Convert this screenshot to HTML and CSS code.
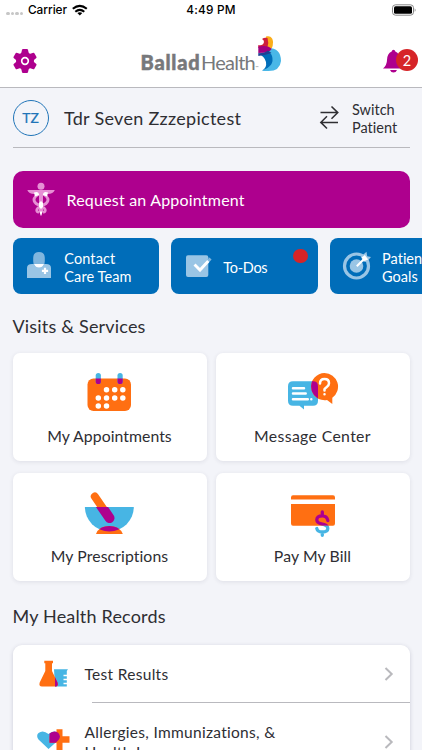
FILE: index.html
```html
<!DOCTYPE html>
<html lang="en">
<head>
<meta charset="utf-8">
<title>Ballad Health</title>
<link rel="stylesheet" href="styles.css">
</head>
<body>
<div class="status">
  <div class="carrier"><i></i><i></i><i></i><i></i><span>Carrier</span>
    <svg width="16" height="12" viewBox="73 4 16 12"><g fill="none" stroke="#000" stroke-width="2.1"><path d="M73.8 8.8Q80.8 2.8 87.8 8.8"/><path d="M76.3 11.7Q80.8 8 85.3 11.7"/></g><path d="M78.3 13.1Q80.8 11.2 83.3 13.1L80.8 15.6Z"/></svg>
  </div>
  <span class="time">4:49 PM</span>
  <svg class="battery" width="25" height="12" viewBox="391 4 25 12"><rect x="392.5" y="4.8" width="21" height="10.4" rx="3" fill="none" stroke="#888"/><rect x="394" y="6.2" width="18" height="7.6" rx="1.6"/><path d="M414.7 8.2q1.8 1.8 0 3.6z" fill="#888"/></svg>
</div>
<header class="header">
  <svg class="gear" width="26" height="26" viewBox="-13 -13 26 26"><g fill="#ae008e"><circle r="9"/><g id="t"><path id="a" d="M-3.8-7.5L-3-11.3Q-2.8-12-2-12H2Q2.8-12 3-11.3L3.8-7.5Z"/><use href="#a" transform="rotate(60)"/><use href="#a" transform="rotate(120)"/></g><use href="#t" transform="rotate(180)"/></g><circle r="3.3" fill="none" stroke="#fff" stroke-width="1.7"/></svg>
  <div class="logo"><b>Ballad</b><span>Health</span><small>™</small>
    <svg width="24" height="36" viewBox="257 36 24 36"><path d="M266 36.5C271 35 273 38.5 273 42.5Q273 46 271.5 49L265 46Z" fill="#fbad18"/><path d="M262 39Q264.500 37 267.500 38Q269 43 267.500 47L258.300 48V45Q263 46 264 42Q264 40 262 39Z" fill="#cf1f3b"/><path d="M268 48Q281 48 281 61Q280 71 268.500 71L262 71Q274 63 268 53Z" fill="#49b7e7"/><path d="M258.300 54Q270 49 272 56Q275 66 262 70.500Q267 68 266 62Q264.500 56 258.300 54Z" fill="#006db9"/><path d="M258.300 46.500Q269 45 271.500 49Q270 53 258.300 53Z" fill="#a1007f"/><path d="M258.300 53Q264 54 268 50.500L271.500 53Q266 55 258.300 56Z" fill="#214192"/></svg>
  </div>
  <div class="alerts"><svg width="26" height="24" viewBox="382 49 26 24"><path d="M391.700 51.400Q392 49.800 393.500 49.800Q395 49.800 395.300 51.400Q400 53.500 400.200 60Q400.200 65 404.500 68.500H383Q387 65 387 60Q387 53.500 391.700 51.400ZM390 70H397Q396 72.600 393.500 72.600Q391 72.600 390 70Z" fill="#ae008e"/></svg><span class="badge">2</span></div>
</header>
<main>
  <section class="patient">
    <span class="avatar">TZ</span><span class="name">Tdr Seven Zzzepictest</span>
    <svg class="swap" width="20" height="25" viewBox="319 106 20 25"><path d="M320.500 113.600H337.300M331.500 107.500L337.800 113.600L331.500 119.700M338 123.400H321.200M327 117.300L320.800 123.400L327 129.500" fill="none" stroke="#2e2e33" stroke-width="1.500"/></svg>
    <span class="switch">Switch<br>Patient</span>
  </section>
  <div class="request">
    <svg width="28" height="36" viewBox="27 183 28 36"><g fill="#e68fd4"><circle cx="41" cy="187.200" r="3.500"/><path d="M27.300 191H54.800Q53 195.500 46.500 195H43V212L41 217L39 212V195H35.500Q29 195.500 27.300 191Z"/></g><g fill="none" stroke="#e68fd4" stroke-width="2.900"><path d="M38.500 195Q31 199.500 36 204.500L44 209Q47 212 43 213.500M43.500 195Q51 199.500 46 204.500L38 209Q35 212 39 213.500"/></g><g fill="#fff"><path d="M34 193.500Q38.500 191.500 39.200 196L35 197.500ZM48 193.500Q43.500 191.500 42.800 196L47 197.500ZM39 204L41 202L43 204V208L41 210L39 208ZM39.500 212.500H42.500L41 217Z"/></g></svg>
    <span>Request an Appointment</span>
  </div>
  <div class="tiles">
    <div class="tile"><svg width="28" height="30" viewBox="25 252 28 30"><path d="M27 279V269Q27 265 32 265H46Q51 265 51 269V279Z" fill="#99c5e5"/><path d="M33.200 262V259Q33.200 253 39 253T44.800 259V262Q44.800 268.500 39 268.500T33.200 262Z" fill="#80b6de"/><path d="M34 265H44Q42.500 268.500 39 268.500T34 265ZM43.900 268.800h2.200v2h2v2.200h-2v2h-2.200v-2h-2v-2.200h2z" fill="#fff"/></svg><span class="care">Contact<br>Care Team</span></div>
    <div class="tile"><svg width="30" height="30" viewBox="184 252 30 30"><rect x="187" y="256.300" width="22.300" height="21.800" rx="2" fill="#99c5e5"/><path d="M195.500 265.500L201 271L211.500 259.500" fill="none" stroke="#80b6de" stroke-width="3"/><path d="M195.500 265.500L201 271L209.300 262" fill="none" stroke="#fff" stroke-width="3"/></svg><span class="todo">To-Dos</span><i class="dot"></i></div>
    <div class="tile"><svg width="30" height="30" viewBox="342 252 30 30"><circle cx="356.500" cy="267" r="12" fill="none" stroke="#99c5e5" stroke-width="3.200"/><circle cx="356.500" cy="267" r="6.800" fill="#99c5e5"/><path d="M361 257.500L366.500 252.800L367.200 257.300L371 258L366.500 263L363 262.500Z" fill="#99c5e5"/><path d="M356.800 267.300L364 260" stroke="#fff" stroke-width="2" fill="none"/><path d="M361.500 258.500L364.800 256L368.200 260.500L364.500 262Z" fill="#fff"/></svg><span class="goals">Patient<br>Goals</span></div>
  </div>
  <h2 class="h-visits">Visits &amp; Services</h2>
  <div class="grid">
    <div class="card"><svg class="cal" width="46" height="42" viewBox="86 371 46 42"><rect x="87.500" y="378.500" width="43.500" height="32.500" rx="6" fill="#ff6f12"/><g fill="#47b5e4"><rect x="95.700" y="373" width="5.200" height="11" rx="2.600"/><rect x="117.500" y="373" width="5.200" height="11" rx="2.600"/></g><path d="M95.700 378.500h5.200v3a2.600 2.600 0 0 1-5.200 0zM117.500 378.500h5.200v3a2.600 2.600 0 0 1-5.200 0z" fill="#ae008e"/><path d="M106.500 389.700h.01M114.700 389.700h.01M122.800 389.700h.01M98.300 397.900h.01M106.500 397.900h.01M114.700 397.900h.01M122.800 397.900h.01M98.300 406h.01M106.500 406h.01" stroke="#fff" stroke-width="5.500" stroke-linecap="round"/></svg><span class="l1">My Appointments</span></div>
    <div class="card"><svg width="52" height="42" viewBox="287 371 52 42"><path d="M293 381.200H313Q318 381.200 318 386.200V400.700Q318 405.700 313 405.700H304V409.500L299.500 405.700H293Q288 405.700 288 400.700V386.200Q288 381.200 293 381.200Z" fill="#47b5e4"/><path d="M324.500 373A13.600 13.600 0 0 1 332.300 397.700V404L327 400A13.600 13.600 0 1 1 324.500 373Z" fill="#ff6f12"/><path d="M312 381.200H313Q318 381.200 318 386.200V398.500Q308.500 392 312 381.200Z" fill="#ae008e"/><path d="M293 388.300H304M293 393.500H305.700M293 399.200H307.800M311.300 399.200h.01M320 383.500Q320 379 324.500 379T329 383.200Q329 385.500 326.500 387.300T324.500 389.800V390.500M324.500 394.300h.01" fill="none" stroke="#fff" stroke-width="2.500" stroke-linecap="round"/></svg><span class="l2">Message Center</span></div>
    <div class="card"><svg width="52" height="46" viewBox="84 491 52 46"><defs><clipPath id="bowl"><path d="M84.900 507H133.800A24.450 24.450 0 0 1 84.900 507Z"/></clipPath></defs><path d="M84.900 507H133.800A24.450 24.450 0 0 1 84.900 507Z" fill="#47b5e4"/><path d="M94.800 496.500L109.500 518" stroke="#ff6f12" stroke-width="8" stroke-linecap="round"/><path d="M96 534Q99 526 109.300 526T122.800 534Z" fill="#ff6f12"/><g clip-path="url(#bowl)"><path d="M94.800 496.500L109.500 518" stroke="#ae008e" stroke-width="10" stroke-linecap="round"/><path d="M96 534Q99 526 109.300 526T122.800 534Z" fill="#ae008e"/></g></svg><span class="l3">My Prescriptions</span></div>
    <div class="card"><svg width="48" height="46" viewBox="289 491 48 46"><path d="M291 499.500V497.500Q291 495.300 293 495.300H333Q335 495.300 335 497.500V499.500ZM291 504H335V523.500Q335 525.800 333 525.800H293Q291 525.800 291 523.500Z" fill="#ff6f12"/><defs><clipPath id="up"><rect x="300" y="500" width="37" height="25.800"/></clipPath><clipPath id="dn"><rect x="300" y="525.800" width="37" height="13"/></clipPath><path id="dol" d="M322.300 512V515M322.300 532V535.300M327.800 520.500Q327 515.800 322.300 515.800Q316.800 515.800 316.800 519.800Q316.800 523 322.300 524.200Q327.800 525.400 327.800 528.500Q327.800 532 322.300 532Q317.500 532 316.800 528.500" fill="none" stroke-width="3.300" stroke-linecap="round"/></defs><g clip-path="url(#up)"><use href="#dol" stroke="#ae008e"/></g><g clip-path="url(#dn)"><use href="#dol" stroke="#47b5e4"/></g></svg><span class="l4">Pay My Bill</span></div>
  </div>
  <h2 class="h-records">My Health Records</h2>
  <div class="list">
    <div class="row"><svg class="ric" width="34" height="30" viewBox="36 657 34 30"><path d="M54 667.300H68L66.800 669V684.600H55Z" fill="#47b5e4"/><path d="M63.500 673.500H67M63.500 677.500H67M63.500 681.500H67" stroke="#fff" stroke-width="1.300"/><path d="M44.300 658.800H53V661.300H52V669L57.500 680.500Q59 684.600 55.500 684.600H42Q38.500 684.600 39.700 680.500L45.300 669V661.300H44.300Z" fill="#ff6f12"/><path d="M55 675.200L57.500 680.500Q58.500 683.500 56 684.600H55Z" fill="#ae008e"/></svg><span class="t1">Test Results</span><svg class="chev" width="10" height="16" viewBox="0 0 10 16"><path d="M1.500 2L7.700 8L1.500 14" fill="none" stroke="#b9b9bd" stroke-width="2"/></svg></div>
    <div class="row two"><svg class="ric" width="34" height="30" viewBox="36 729 34 30"><path d="M48.500 751L38.500 741.500Q35.800 737.500 38.500 735Q43 731.500 48.500 736Q54 731.500 58.500 735Q61.500 738 58.500 742Z" fill="#47b5e4"/><path d="M56.500 731.300H62.500V738.300H69.500V744.700H62.500V752H56.500V744.700H49.500V738.300H56.500Z" fill="#ff6f12"/><path d="M49.500 738.300V735.400Q54 731.800 58.200 734.700Q61.500 738.500 58.500 742L55.800 744.700H49.500Z" fill="#ae008e"/></svg><span class="t2">Allergies, Immunizations, &amp;<br>Health Issues</span><svg class="chev" width="10" height="16" viewBox="0 0 10 16"><path d="M1.500 2L7.700 8L1.500 14" fill="none" stroke="#b9b9bd" stroke-width="2"/></svg></div>
  </div>
</main>
</body>
</html>
```
FILE: styles.css
```css
* { box-sizing: border-box; }
html, body { height: 750px; overflow: hidden; }
body { margin: 0; background: #f3f4f9; font-family: Lato, sans-serif; font-variant-ligatures: none; color: #2e2e33; }
svg { display: block; flex: none; }
span { white-space: nowrap; }

.status { height: 20px; background: #fff; display: grid; grid-template-columns: 1fr auto 1fr; align-items: center; font: 500 11.8px/20px Inter, sans-serif; color: #000; }
.time { letter-spacing: .2px; }
.carrier { display: flex; align-items: center; padding-left: 6px; }
.carrier i { width: 3.6px; height: 3.6px; margin: 7px 1px 0 0; border-radius: 50%; background: #c6c6c6; }
.carrier span { margin: 0 5px 0 3.500px; }
.battery { justify-self: end; margin-right: 6px; }

.header { height: 68px; background: #fff; border-bottom: 1px solid #b9b9be; display: grid; grid-template-columns: 1fr 141px 1fr; padding: 0 4px 0 12px; }
.gear { margin-top: 28px; }
.logo { display: flex; color: #77787b; font-size: 20px; line-height: 20px; height: 52px; align-items: flex-end; margin-left: -4px; }
.logo b { width: 60.500px; font-weight: 900; letter-spacing: .8px; -webkit-text-stroke: .5px; }
.logo span { width: 54.500px; letter-spacing: -.75px; }
.logo small { width: 4px; font-size: 4px; line-height: 8px; }
.logo svg { margin-left: -2.500px; }
.alerts { position: relative; justify-self: end; width: 36px; padding-top: 29px; }
.badge { position: absolute; right: 0; top: 29px; width: 22px; height: 22px; border-radius: 50%; background: #d62428; color: #fff; font-size: 14.500px; line-height: 23px; text-align: center; }

main { height: 662px; padding: 0 12.500px; overflow: hidden; }
.patient { display: flex; align-items: center; height: 60px; border-bottom: 1px solid #b9b9be; }
.avatar { width: 36px; height: 36px; border: 1.300px solid #2074b8; border-radius: 50%; color: #2074b8; font-size: 14px; line-height: 34px; text-align: center; -webkit-text-stroke: .2px; }
.name { width: 255px; margin-left: 15.500px; font-size: 18px; letter-spacing: .29px; }
.switch { margin-left: 13px; padding-top: 2px; font-size: 14.500px; line-height: 18px; }
.swap { flex: none; }

.request { height: 57px; margin-top: 23.300px; border-radius: 10px; background: #ae008e; display: flex; align-items: center; padding-left: 14.500px; gap: 11.500px; color: #fff; font-size: 16px; letter-spacing: .2px; }
.tiles { display: flex; gap: 12.300px; margin-top: 10.200px; width: 480px; }
.tile { position: relative; flex: none; width: 146.500px; height: 56px; border-radius: 8px; background: #006db9; display: flex; align-items: center; padding-left: 12px; color: #fff; font-size: 14.500px; line-height: 17.500px; }
.care { margin-left: 11.800px; padding-top: 3px; letter-spacing: .1px; }
.todo { margin-left: 10px; padding-top: 2px; letter-spacing: -.3px; }
.goals { margin-left: 10px; padding-top: 3px; }
.dot { position: absolute; right: 10px; top: 10.500px; width: 14.500px; height: 14.500px; border-radius: 50%; background: #d62428; }

h2 { margin: 0; width: max-content; font-size: 18px; line-height: 24px; font-weight: 400; white-space: nowrap; letter-spacing: .18px; }
.h-visits { margin-top: 20px; }
.grid { display: grid; grid-template-columns: 194px 194px; gap: 12px 9px; margin-top: 14.500px; }
.card { height: 108px; border-radius: 7px; background: #fff; box-shadow: 0 1px 4px rgba(40, 40, 70, .1); display: flex; flex-direction: column; align-items: center; justify-content: space-between; padding: 18px 0 15px; font-size: 15.800px; line-height: 20px; }
.cal { margin-left: -2px; }
.l1 { letter-spacing: .05px; }
.l2 { letter-spacing: .35px; }
.l3 { letter-spacing: .08px; }
.l4 { letter-spacing: .1px; }
.h-records { margin-top: 23px; }
.list { height: 150px; margin-top: 17px; background: #fff; border-radius: 9px; box-shadow: 0 1px 4px rgba(40, 40, 70, .18); font-size: 15.500px; line-height: 20px; }
.row { position: relative; height: 58px; display: flex; align-items: center; padding: 0 15.500px 0 23.500px; }
.row:first-child::after { content: ""; position: absolute; left: 79px; right: 0; bottom: 0; height: 1px; background: #b9b9be; }
.row span { margin-left: 14.500px; flex: 1; letter-spacing: .3px; }
.row.two { height: 78px; }
```
